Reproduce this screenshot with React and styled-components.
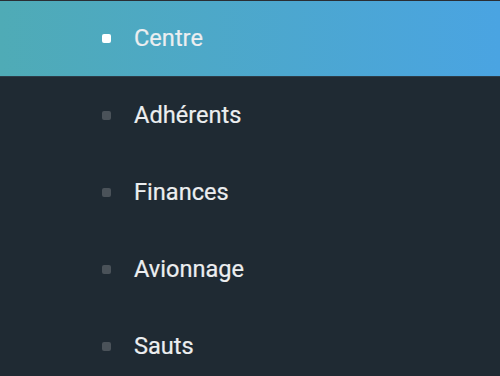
import React from 'react'
import styled, { createGlobalStyle } from 'styled-components'

const GlobalStyle = createGlobalStyle`
  html, body {
    margin: 0;
    padding: 0;
    background: #1f2a33;
    font-family: Roboto, "Liberation Sans", sans-serif;
  }
`

const Menu = styled.nav`
  width: 500px;
  height: 376px;
  overflow: hidden;
  background: #1f2a33;
  border-top: 1px solid #2a2e34;
  box-sizing: border-box;
`

const List = styled.ul`
  list-style: none;
  margin: 0;
  padding: 0;
`

const Item = styled.li`
  display: flex;
  align-items: center;
  gap: 23px;
  height: 75px;
  padding-left: 102px;
  border-bottom: 1px solid ${p => (p.active ? '#2c3c48' : 'transparent')};
  margin-bottom: 1px;
  background: ${p => (p.active ? 'linear-gradient(90deg, #4fabb6 0%, #4aa4e2 100%)' : 'transparent')};
  color: #eceef0;
  font-size: 23.6px;
  font-weight: 400;
  -webkit-text-stroke: 0.2px #eceef0;
  cursor: pointer;
`

const Bullet = styled.span`
  width: 9px;
  height: 9px;
  border-radius: 2px;
  background: ${p => (p.active ? '#ffffff' : '#4a5259')};
  flex: none;
`

const Label = styled.span`
  line-height: 1;
  padding-top: 1px;
`

const items = ['Centre', 'Adhérents', 'Finances', 'Avionnage', 'Sauts']

export default function App () {
  return (
    <>
      <GlobalStyle />
      <Menu>
        <List>
          {items.map((label, i) => (
            <Item key={label} active={i === 0}>
              <Bullet active={i === 0} />
              <Label>{label}</Label>
            </Item>
          ))}
        </List>
      </Menu>
    </>
  )
}
